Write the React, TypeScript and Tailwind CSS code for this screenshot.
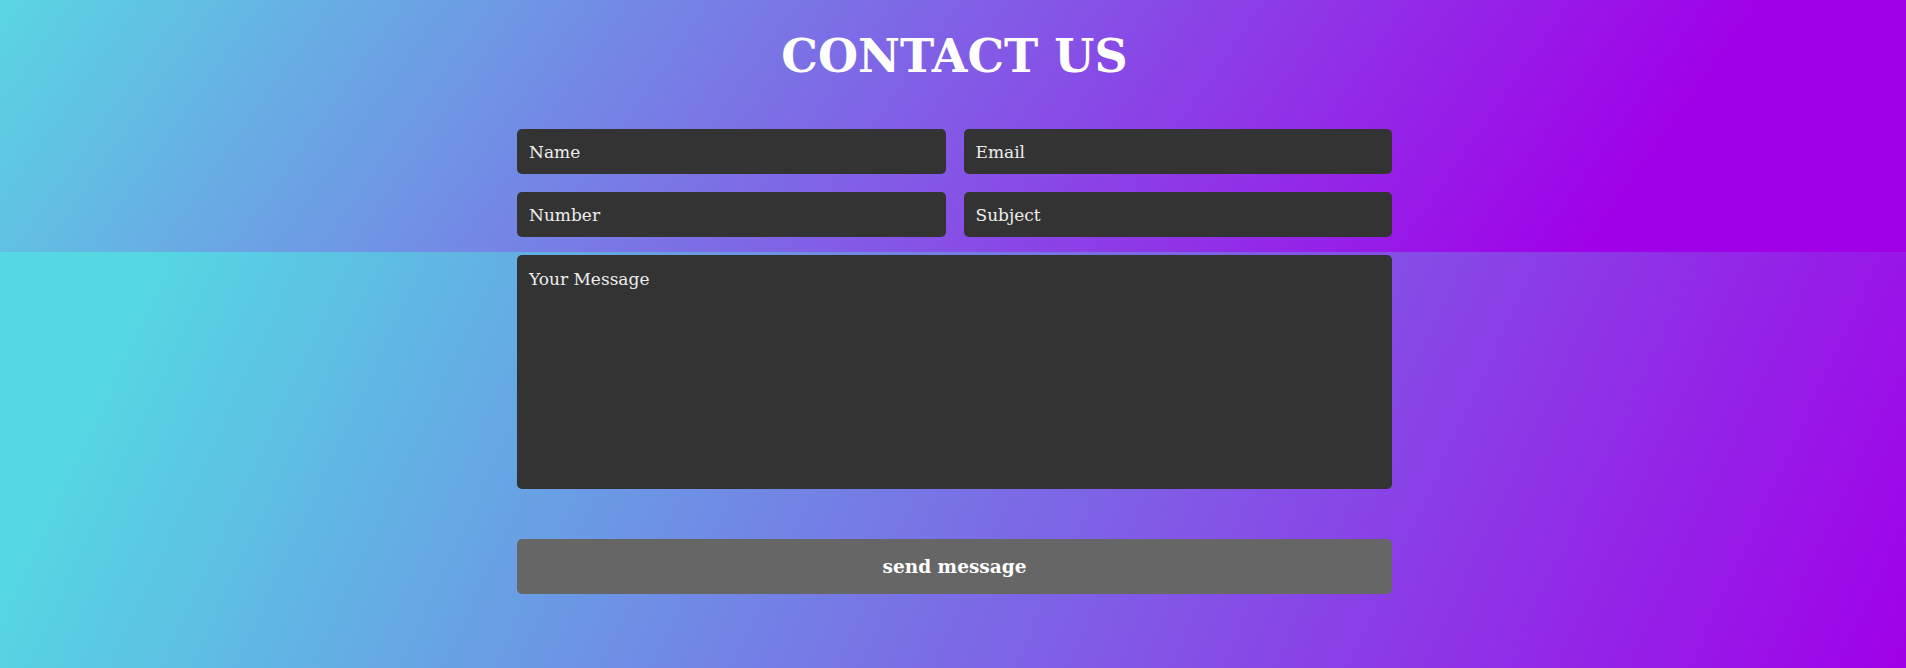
import React from "react";

const fields = [
  { name: "name", placeholder: "Name", type: "text" },
  { name: "email", placeholder: "Email", type: "email" },
  { name: "number", placeholder: "Number", type: "tel" },
  { name: "subject", placeholder: "Subject", type: "text" },
];

const inputClass =
  "h-[45px] w-full rounded-[5px] bg-[#333333] px-3 text-[17px] text-[#eeeeee] placeholder:text-[#eeeeee] outline-none";

const App = () => {
  return (
    <div
      className="min-h-screen w-full pl-[3px] pt-[33px] font-['DejaVu_Serif',Georgia,serif] [background-image:linear-gradient(125deg,#5ad6e3_0%,#a000e8_85%),linear-gradient(115deg,#55d8e3_12%,#a000e8_100%)] [background-size:100%_252px,100%_100%] [background-repeat:no-repeat]"
    >
      <h1 className="text-center text-[46px] font-bold leading-none text-white">
        CONTACT US
      </h1>

      <form
        className="mx-auto mt-[50px] flex w-[875px] flex-col"
        onSubmit={(e) => e.preventDefault()}
      >
        <div className="grid grid-cols-2 gap-[18px]">
          {fields.map((field) => (
            <input
              key={field.name}
              name={field.name}
              type={field.type}
              placeholder={field.placeholder}
              className={inputClass}
            />
          ))}
        </div>

        <textarea
          name="message"
          placeholder="Your Message"
          className="mt-[18px] h-[234px] w-full resize-none rounded-[5px] bg-[#333333] px-3 py-3 text-[17px] text-[#eeeeee] placeholder:text-[#eeeeee] outline-none"
        />

        <button
          type="submit"
          className="mt-[50px] h-[55px] w-full rounded-[5px] bg-[#666666] text-[18.5px] font-bold text-white"
        >
          send message
        </button>
      </form>
    </div>
  );
};

export default App;
